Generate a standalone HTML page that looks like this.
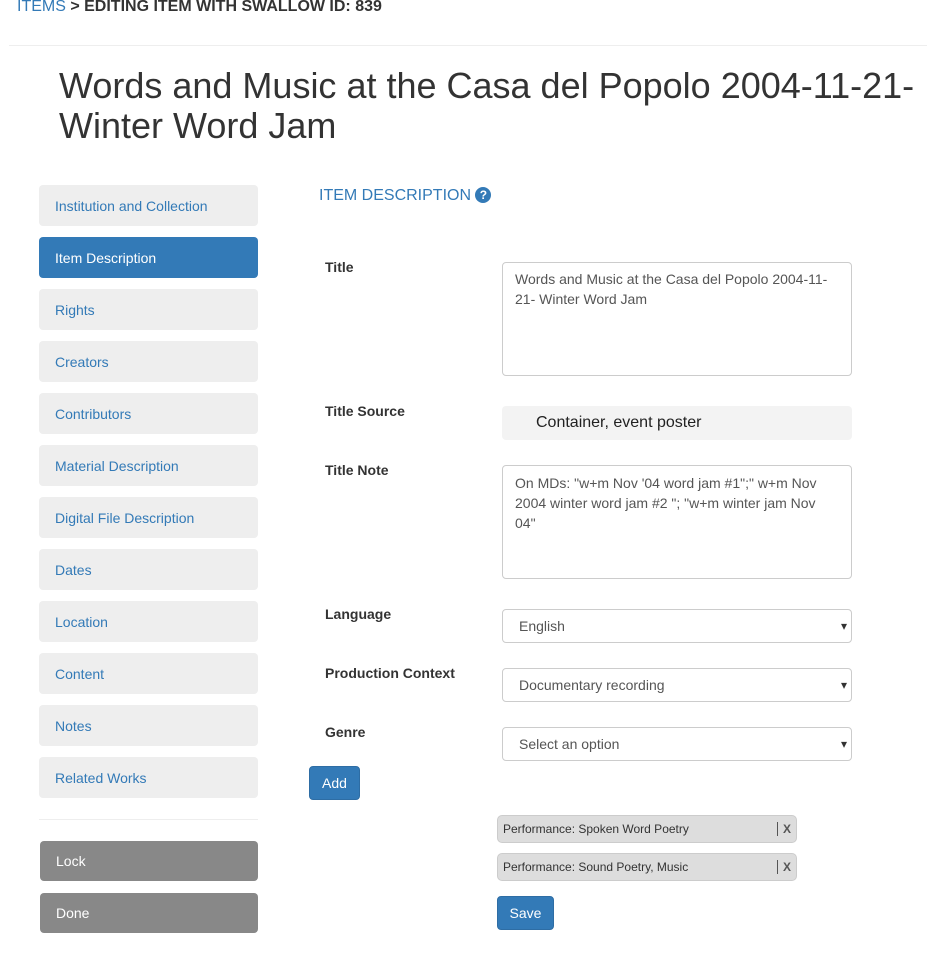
<!DOCTYPE html>
<html><head><style>
*{box-sizing:border-box;margin:0;padding:0}
body{width:927px;height:960px;background:#fff;font-family:"Liberation Sans",sans-serif;color:#333;position:relative;overflow:hidden}
.a{position:absolute}
.crumb{left:17px;top:-2px;font-size:16px;font-weight:bold;color:#333}
.crumb span{color:#337ab7;font-weight:normal}
.hr{left:9px;top:45px;width:918px;height:1px;background:#eee}
h1{position:absolute;left:59px;top:66px;font-size:36px;font-weight:normal;line-height:40px;color:#333}
.nav{position:absolute;left:39px;width:219px;height:41px;background:#eee;border-radius:4px;font-size:14px;color:#337ab7;padding-left:16px;line-height:43px}
.nav.act{background:#337ab7;color:#fff}
.nav.g{background:#888;color:#fff;left:40px;width:218px;height:40px;line-height:40px}
.lbl{position:absolute;font-size:14px;font-weight:bold;color:#333}
.box{position:absolute;left:502px;width:350px;border:1px solid #ccc;border-radius:4px;font-size:14px;color:#555;background:#fff}
.sel{height:34px;line-height:32px;padding-left:16px}
.sel:after{content:"▾";position:absolute;right:4px;top:0;font-size:12px;color:#333}
.btn{position:absolute;background:#337ab7;color:#fff;border-radius:4px;font-size:14px;text-align:center;border:1px solid #2e6da4}
.tag{position:absolute;left:497px;width:300px;height:28px;background:#ddd;border:1px solid #ccc;border-radius:5px;font-size:12px;line-height:26px;padding-left:5px;color:#333}
.tag b{position:absolute;right:5px;top:0;color:#555;border-left:1px solid #555;padding-left:5px;line-height:14px;margin-top:6px}
</style></head><body>
<div class="a crumb"><span>ITEMS</span> &gt; EDITING ITEM WITH SWALLOW ID: 839</div>
<div class="a hr"></div>
<h1>Words and Music at the Casa del Popolo 2004-11-21-<br>Winter Word Jam</h1>
<div class="nav" style="top:185px">Institution and Collection</div>
<div class="nav act" style="top:237px">Item Description</div>
<div class="nav" style="top:289px">Rights</div>
<div class="nav" style="top:341px">Creators</div>
<div class="nav" style="top:393px">Contributors</div>
<div class="nav" style="top:445px">Material Description</div>
<div class="nav" style="top:497px">Digital File Description</div>
<div class="nav" style="top:549px">Dates</div>
<div class="nav" style="top:601px">Location</div>
<div class="nav" style="top:653px">Content</div>
<div class="nav" style="top:705px">Notes</div>
<div class="nav" style="top:757px">Related Works</div>
<div class="a" style="left:39px;top:819px;width:219px;height:1px;background:#eee"></div>
<div class="nav g" style="top:841px">Lock</div>
<div class="nav g" style="top:893px">Done</div>
<div class="a" style="left:319px;top:187px;font-size:16px;color:#337ab7">ITEM DESCRIPTION <span style="display:inline-block;width:16px;height:16px;border-radius:50%;background:#337ab7;color:#fff;font-size:12px;font-weight:bold;text-align:center;line-height:16px;vertical-align:1px">?</span></div>
<div class="lbl" style="left:325px;top:259px">Title</div>
<div class="box" style="top:262px;height:114px;padding:6px 12px;line-height:20px">Words and Music at the Casa del Popolo 2004-11-21- Winter Word Jam</div>
<div class="lbl" style="left:325px;top:403px">Title Source</div>
<div class="a" style="left:502px;top:406px;width:350px;height:34px;background:#f3f3f3;border-radius:4px;font-size:16px;color:#222;line-height:33px;padding-left:34px">Container, event poster</div>
<div class="lbl" style="left:325px;top:462px">Title Note</div>
<div class="box" style="top:465px;height:114px;padding:7px 12px;line-height:20px">On MDs: "w+m Nov '04 word jam #1";" w+m Nov 2004 winter word jam #2 "; "w+m winter jam Nov 04"</div>
<div class="lbl" style="left:325px;top:606px">Language</div>
<div class="box sel" style="top:609px">English</div>
<div class="lbl" style="left:325px;top:665px">Production Context</div>
<div class="box sel" style="top:668px">Documentary recording</div>
<div class="lbl" style="left:325px;top:724px">Genre</div>
<div class="box sel" style="top:727px">Select an option</div>
<div class="btn" style="left:309px;top:766px;width:51px;height:34px;line-height:32px">Add</div>
<div class="tag" style="top:815px">Performance: Spoken Word Poetry<b>X</b></div>
<div class="tag" style="top:853px">Performance: Sound Poetry, Music<b>X</b></div>
<div class="btn" style="left:497px;top:896px;width:57px;height:34px;line-height:32px">Save</div>
</body></html>
